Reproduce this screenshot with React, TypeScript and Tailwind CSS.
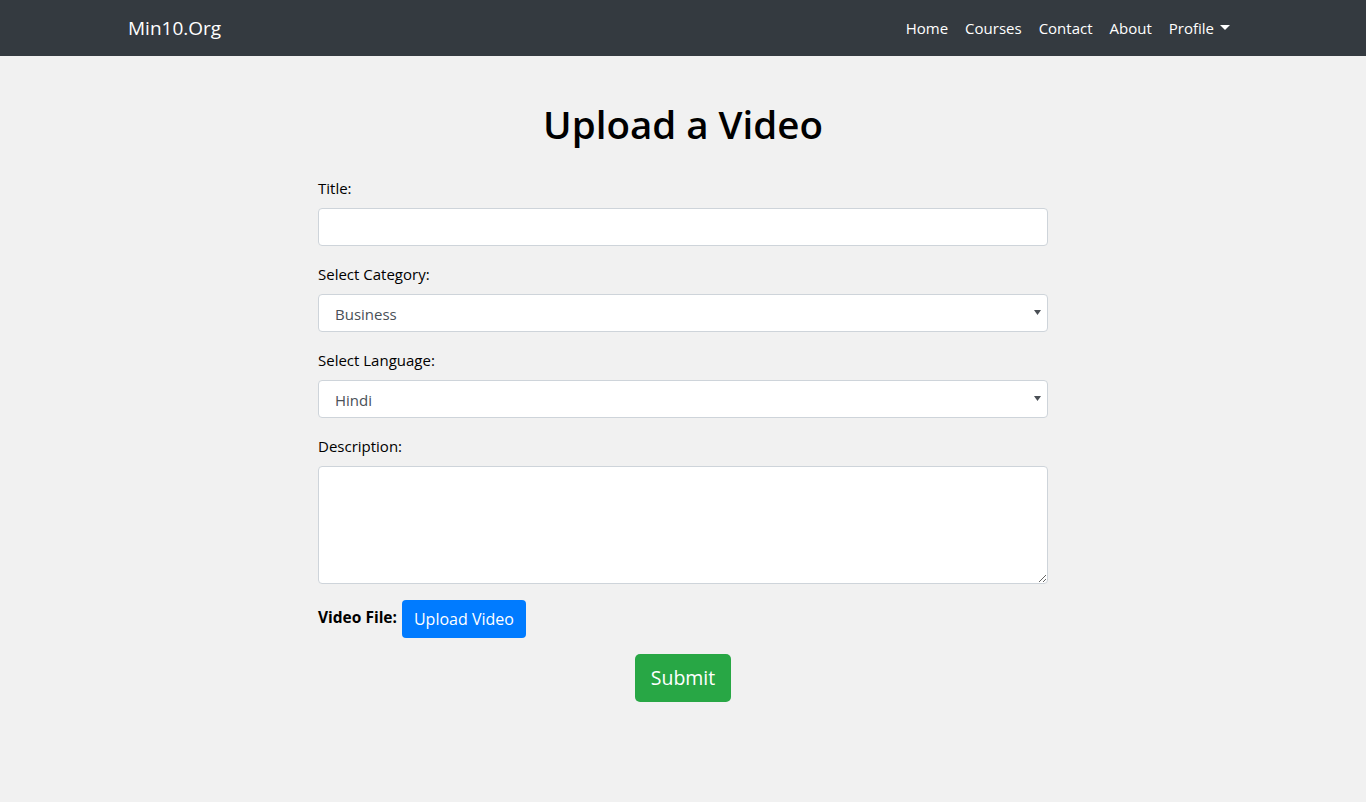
import React from "react";

const font = { fontFamily: '"Open Sans", "Noto Sans", sans-serif' };

function Caret() {
  return (
    <svg width="10" height="6" viewBox="0 0 10 6" className="ml-[6px] inline-block">
      <path d="M0 0 L10 0 L5 5 Z" fill="currentColor" />
    </svg>
  );
}

function SelectField({ value }: { value: string }) {
  return (
    <div className="relative">
      <select
        defaultValue={value}
        className="w-full h-[38px] appearance-none bg-white border border-[#ced4da] rounded-[4px] pl-[16px] pr-8 pt-[3px] text-[15px] text-[#495057] outline-none"
        style={font}
      >
        <option>{value}</option>
      </select>
      <svg width="7" height="5" viewBox="0 0 7 5" className="absolute right-[7px] top-[16px] pointer-events-none">
        <path d="M0 0 L7 0 L3.5 5 Z" fill="#4a4f55" />
      </svg>
    </div>
  );
}

export default function App() {
  return (
    <div className="min-h-[802px] bg-[#f1f1f1] text-[#212529]" style={font}>
      <nav className="h-14 bg-[#343a40]">
        <div className="mx-auto w-[1140px] h-full px-[15px] flex items-center justify-between">
          <span className="text-[19px] text-white">Min10.Org</span>
          <div className="flex items-center text-[15px] text-white">
            <a className="px-[8.5px]">Home</a>
            <a className="px-[8.5px]">Courses</a>
            <a className="px-[8.5px]">Contact</a>
            <a className="px-[8.5px]">About</a>
            <a className="pl-[8.5px] pr-2 flex items-center">
              Profile
              <Caret />
            </a>
          </div>
        </div>
      </nav>
      <main className="w-[730px] mx-auto pt-[44px]">
        <h1 className="text-center text-[38.5px] leading-[48px] font-semibold text-black mb-[28px]">Upload a Video</h1>
        <div className="mb-4">
          <label className="block text-[15px] leading-6 mb-2 text-black">Title:</label>
          <input className="w-full h-[38px] bg-white border border-[#ced4da] rounded-[4px] px-3 outline-none" />
        </div>
        <div className="mb-4">
          <label className="block text-[15px] leading-6 mb-2 text-black">Select Category:</label>
          <SelectField value="Business" />
        </div>
        <div className="mb-4">
          <label className="block text-[15px] leading-6 mb-2 text-black">Select Language:</label>
          <SelectField value="Hindi" />
        </div>
        <div className="mb-4">
          <label className="block text-[15px] leading-6 mb-2 text-black">Description:</label>
          <textarea className="block w-full h-[118px] bg-white border border-[#ced4da] rounded-[4px] px-3 py-1.5 outline-none" />
        </div>
        <div className="flex items-start gap-[5px]">
          <span className="text-[15.5px] leading-6 mt-[5px] font-bold text-black">Video File:</span>
          <button className="h-[38px] px-3 bg-[#007bff] text-white text-[16px] rounded-[4px]">Upload Video</button>
        </div>
        <div className="flex justify-center mt-4">
          <button className="h-12 px-4 bg-[#28a745] text-white text-[19.5px] rounded-[5px]">Submit</button>
        </div>
      </main>
    </div>
  );
}
